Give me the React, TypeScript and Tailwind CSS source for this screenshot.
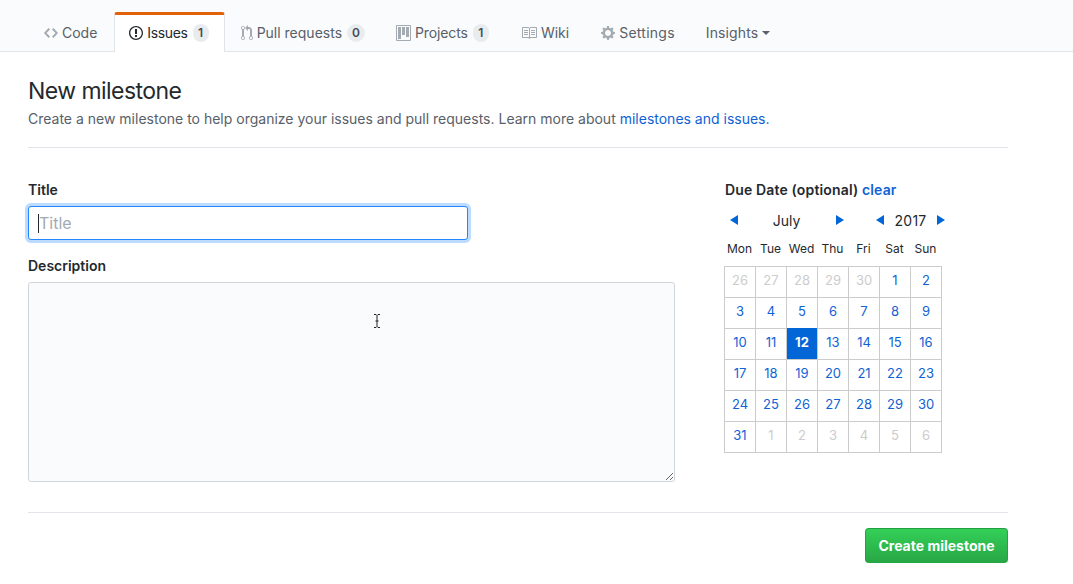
import React from 'react'

const font = "font-['Inter','Liberation_Sans',sans-serif]"

function Icon({ d, w, cls }: { d: string; w: number; cls?: string }) {
  return (
    <svg viewBox={`0 0 ${w} 16`} width={w} height={16} className={cls ?? 'fill-[#a3aab1]'}>
      <path fillRule="evenodd" d={d} />
    </svg>
  )
}

const icons = {
  code: 'M9.5 3L8 4.5 11.5 8 8 11.5 9.5 13 14 8 9.5 3zm-5 0L0 8l4.5 5L6 11.5 2.5 8 6 4.5 4.5 3z',
  issue: 'M7 2.3c3.14 0 5.7 2.56 5.7 5.7s-2.56 5.7-5.7 5.7A5.71 5.71 0 0 1 1.3 8c0-3.14 2.56-5.7 5.7-5.7zM7 1C3.14 1 0 4.14 0 8s3.14 7 7 7 7-3.14 7-7-3.14-7-7-7zm1 3H6v5h2V4zm0 6H6v2h2v-2z',
  pull: 'M11 11.28V5c-.03-.78-.34-1.47-.94-2.06C9.46 2.35 8.78 2.03 8 2H7V0L4 3l3 3V4h1c.27.02.48.11.69.31.21.2.3.42.31.69v6.28A1.993 1.993 0 0 0 10 15a1.993 1.993 0 0 0 1-3.72zm-1 2.92c-.66 0-1.2-.55-1.2-1.2 0-.65.55-1.2 1.2-1.2.65 0 1.2.55 1.2 1.2 0 .65-.55 1.2-1.2 1.2zM4 3c0-1.11-.89-2-2-2a1.993 1.993 0 0 0-1 3.72v6.56A1.993 1.993 0 0 0 2 15a1.993 1.993 0 0 0 1-3.72V4.72c.59-.34 1-.98 1-1.72zm-.8 10c0 .66-.55 1.2-1.2 1.2-.65 0-1.2-.55-1.2-1.2 0-.65.55-1.2 1.2-1.2.65 0 1.2.55 1.2 1.2zM2 4.2C1.34 4.2.8 3.65.8 3c0-.65.55-1.2 1.2-1.2.65 0 1.2.55 1.2 1.2 0 .65-.55 1.2-1.2 1.2z',
  project: 'M10 12h3V2h-3v10zm-4-2h3V2H6v8zm-4 4h3V2H2v12zm-1 1h13V1H1v14zM14 0H1a1 1 0 0 0-1 1v14a1 1 0 0 0 1 1h13a1 1 0 0 0 1-1V1a1 1 0 0 0-1-1z',
  book: 'M3 5h4v1H3V5zm0 3h4V7H3v1zm0 2h4V9H3v1zm11-5h-4v1h4V5zm0 2h-4v1h4V7zm0 2h-4v1h4V9zm2-6v9c0 .55-.45 1-1 1H9.5l-1 1-1-1H2c-.55 0-1-.45-1-1V3c0-.55.45-1 1-1h5.5l1 1 1-1H15c.55 0 1 .45 1 1zm-8 .5L7.5 3H2v9h6V3.5zm7-.5H9.5l-.5.5V12h6V3z',
  gear: 'M14 8.77v-1.6l-1.94-.64-.45-1.09.88-1.84-1.13-1.13-1.81.91-1.09-.45-.69-1.92h-1.6l-.63 1.94-1.11.45-1.84-.88-1.13 1.13.91 1.81-.45 1.09L0 7.23v1.59l1.94.64.45 1.09-.88 1.84 1.13 1.13 1.81-.91 1.09.45.69 1.92h1.59l.63-1.94 1.11-.45 1.84.88 1.13-1.13-.92-1.81.47-1.09L14 8.75v.02zM7 11c-1.66 0-3-1.34-3-3s1.34-3 3-3 3 1.34 3 3-1.34 3-3 3z',
}

function Tab({ icon, w, label, count, active, labelCls, pad }: { icon?: string; w?: number; label: string; count?: number; active?: boolean; labelCls?: string; pad?: string }) {
  return (
    <a
      className={
        active
          ? 'flex items-center gap-[4px] h-[40px] -mb-px pl-[14px] pr-[15px] pb-[2px] bg-white border-x border-[#e1e4e8] border-t-[3px] border-t-[#e36209] rounded-t-[3px] text-[#24292e]'
          : 'flex items-center gap-[4px] h-[39px] pl-[16px] pt-[2px] text-[#586069] ' + (pad ?? 'pr-[16px]')
      }
    >
      {icon && <Icon d={icon} w={w!} cls={active ? 'fill-[#24292e]' : undefined} />}
      <span className={labelCls}>{label}</span>
      {count !== undefined && (
        <span className="ml-px px-[5px] h-[18px] min-w-[16px] flex items-center justify-center rounded-full bg-[#e9ecef] text-[12px] font-semibold text-[#444d56]">
          {count}
        </span>
      )}
    </a>
  )
}

const days = [26, 27, 28, 29, 30, 1, 2, 3, 4, 5, 6, 7, 8, 9, 10, 11, 12, 13, 14, 15, 16, 17, 18, 19, 20, 21, 22, 23, 24, 25, 26, 27, 28, 29, 30, 31, 1, 2, 3, 4, 5, 6]

function Arrow({ left }: { left?: boolean }) {
  return (
    <svg viewBox="0 0 8 10" width={8} height={10} className="fill-[#0366d6] shrink-0">
      <path d={left ? 'M8 0v10L0 5z' : 'M0 0v10l8-5z'} />
    </svg>
  )
}

function Calendar() {
  return (
    <div className="w-[218px] -ml-px">
      <div className="flex items-center h-[20px] mt-[10px] text-[14px] text-[#24292e]">
        <span className="w-[22px] shrink-0 flex justify-center -ml-[1px]"><Arrow left /></span>
        <span className="w-[83px] shrink-0 text-center">July</span>
        <span className="w-[24px] shrink-0 flex justify-center"><Arrow /></span>
        <span className="w-[32px] shrink-0 flex justify-end"><Arrow left /></span>
        <span className="w-[53px] shrink-0 text-center tracking-[0.3px]">2017</span>
        <Arrow />
      </div>
      <div className="grid grid-cols-[repeat(7,31px)] h-[20px] mt-[9px] mb-[7px] text-[12px] text-[#24292e] text-center items-center">
        {['Mon', 'Tue', 'Wed', 'Thu', 'Fri', 'Sat', 'Sun'].map((d) => (
          <span key={d}>{d}</span>
        ))}
      </div>
      <div className="grid grid-cols-[repeat(7,31px)] auto-rows-[31px] border-t border-l border-[#ccc] w-[218px] text-[13px]">
        {days.map((d, i) => {
          const muted = i < 5 || i > 35
          const today = i === 16
          return (
            <span
              key={i}
              className={
                'flex items-center justify-center pb-[2px] border-r border-b border-[#ccc] -mt-px ' +
                (today ? 'bg-[#0366d6] text-white font-bold' : muted ? 'text-[#ccc]' : 'text-[#0f62d6]')
              }
            >
              {d}
            </span>
          )
        })}
      </div>
    </div>
  )
}

export default function App() {
  return (
    <div className={`${font} relative min-h-[584px] bg-white text-[14px] text-[#24292e]`}>
      <nav className="flex items-end h-[52px] pl-[28px] bg-[#fafbfc] border-b border-[#e1e4e8]">
        <Tab icon={icons.code} w={14} label="Code" pad="pr-[17px]" />
        <Tab icon={icons.issue} w={14} label="Issues" count={1} active labelCls="tracking-[-0.35px]" />
        <Tab icon={icons.pull} w={12} label="Pull requests" count={0} pad="pr-[15px]" />
        <Tab icon={icons.project} w={15} label="Projects" count={1} labelCls="tracking-[-0.1px]" />
        <Tab icon={icons.book} w={16} label="Wiki" />
        <Tab icon={icons.gear} w={14} label="Settings" labelCls="tracking-[0.25px]" pad="pr-[15px]" />
        <a className="flex items-center gap-[4px] h-[39px] pl-[16px] pt-[2px] text-[#586069]">
          <span className="tracking-[0.12px]">Insights</span>
          <span className="w-0 h-0 border-x-[4px] border-x-transparent border-t-[4px] border-t-[#586069]" />
        </a>
      </nav>

      <main className="w-[980px] ml-[28px]">
        <h1 className="mt-[24px] text-[23px] tracking-[-0.55px] leading-[30px] font-normal">New milestone</h1>
        <p className="mt-[3px] leading-[20px] text-[#586069]">
          Create a new milestone to help organize your issues and pull requests. Learn more about{' '}
          <a className="text-[#0f62d6]">milestones and issues.</a>
        </p>
        <hr className="mt-[18px] border-[#e1e4e8]" />

        <div className="flex mt-[32px]">
          <div className="w-[647px]">
            <label className="block font-semibold leading-[20px]">Title</label>
            <div className="relative mt-[6px] w-[440px]">
              <input
                placeholder="Title"
                className="block w-full h-[34px] px-[10px] rounded-[3px] bg-white border border-[#2188ff] ring-[3px] ring-[#2188ff]/30 text-[16px] outline-none placeholder:text-[#a3aab1]"
              />
              <span className="absolute left-[10px] top-[8px] w-px h-[19px] bg-[#24292e]" />
            </div>
            <label className="block mt-[16px] font-semibold leading-[20px]">Description</label>
            <textarea className="block mt-[6px] w-[647px] h-[200px] rounded-[3px] bg-[#fafbfc] border border-[#d1d5da] outline-none" />
          </div>

          <div className="ml-[50px]">
            <div className="font-semibold leading-[20px] tracking-[0.15px]">
              Due Date (optional) <a className="text-[#0f62d6]">clear</a>
            </div>
            <Calendar />
          </div>
        </div>

        <hr className="mt-[30px] border-[#e1e4e8]" />
        <div className="flex justify-end mt-[15px]">
          <button className="h-[35px] w-[143px] rounded-[4px] border border-[#1f9c3f]/80 bg-gradient-to-b from-[#34d058] to-[#28a745] text-white font-bold">
            Create milestone
          </button>
        </div>
      </main>

      <svg viewBox="0 0 8 16" width={8} height={16} className="absolute left-[373px] top-[313px] stroke-[#222] fill-none">
        <path d="M1 1.5h2l1 1 1-1h2M4 2.5v11M1 14.5h2l1-1 1 1h2M2.5 8h3" />
      </svg>
    </div>
  )
}
